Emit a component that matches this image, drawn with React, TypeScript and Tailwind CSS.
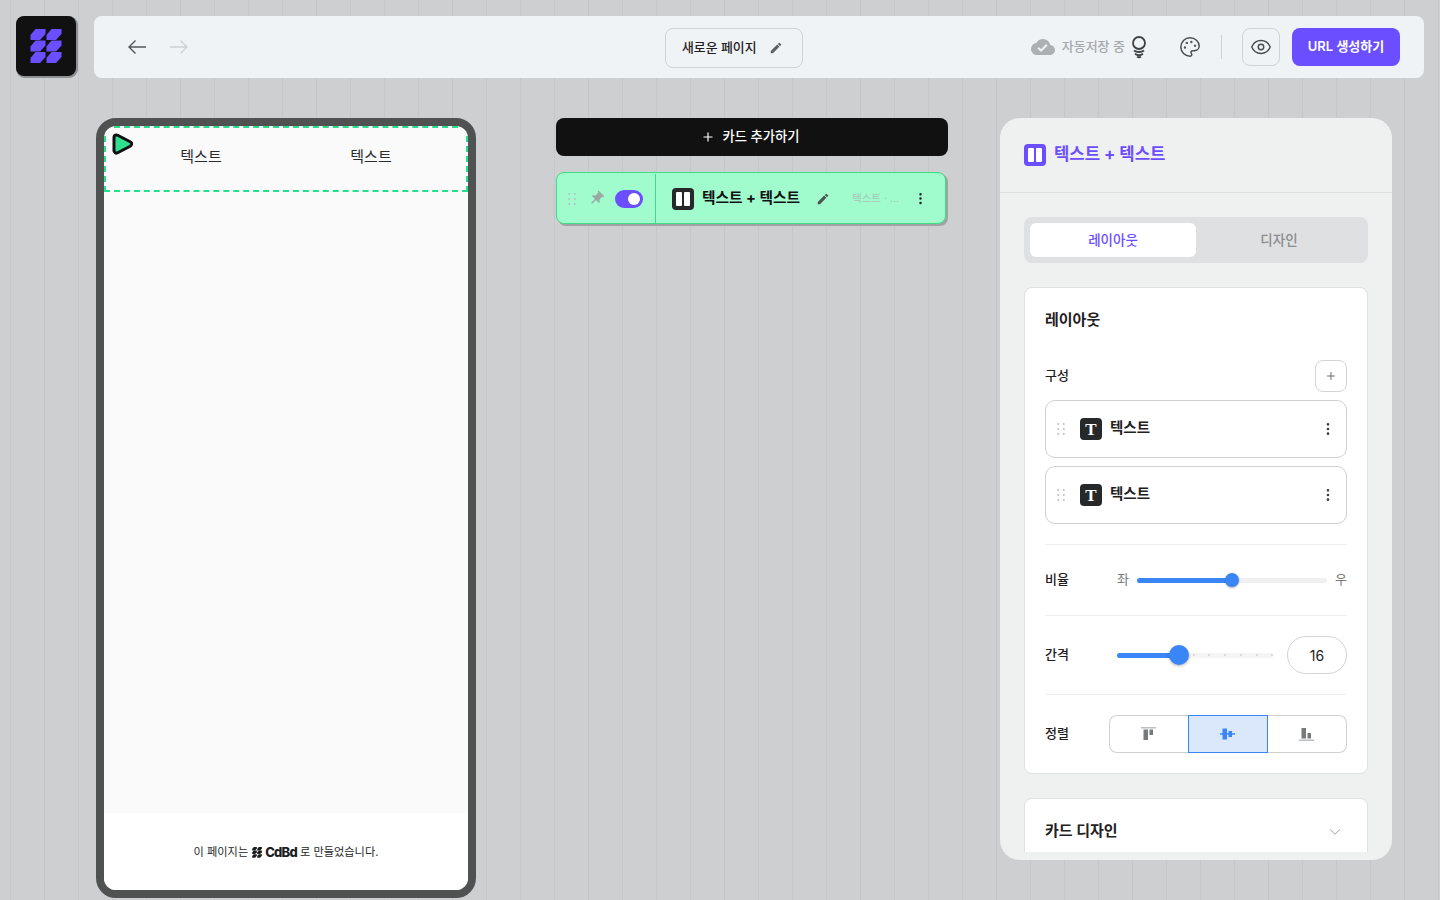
import React from 'react';
import { ChevronDown, Eye, MoreVertical, Palette, Plus } from 'lucide-react';
import { MdCloudDone, MdEdit, MdPushPin } from 'react-icons/md';

const Logo = ({ size = 32, fill = '#6b4eff' }: { size?: number; fill?: string }) => (
  <svg width={size} height={(size * 34) / 32} viewBox="0 0 32 34" fill={fill}>
    {[0, 11.5, 23].map((y) => (
      <React.Fragment key={y}>
        <path d={`M5.500 ${y}H15.500V${y + 5}L10 ${y + 11}H0.500V${y + 6}Z`} />
        <path d={`M21.500 ${y}H31.500V${y + 5}L26 ${y + 11}H16.500V${y + 6}Z`} />
      </React.Fragment>
    ))}
  </svg>
);

const Grip = () => (
  <svg width="8" height="12" viewBox="0 0 8 12" fill="#bdbfc0">
    {[1, 6, 11].map((y) => (
      <React.Fragment key={y}>
        <circle cx="1.2" cy={y} r="1" />
        <circle cx="6.8" cy={y} r="1" />
      </React.Fragment>
    ))}
  </svg>
);

const Arrow = ({ color, flip }: { color: string; flip?: boolean }) => (
  <svg width="20" height="16" viewBox="0 0 20 16" fill="none" stroke={color} strokeWidth="1.4" className={flip ? 'rotate-180' : ''}>
    <path d="M19 8H2M8.500 1.500L2 8l6.500 6.500" />
  </svg>
);

const Columns = ({ color }: { color: string }) => (
  <span className="flex h-[22px] w-[22px] items-center justify-center gap-[2px] rounded-[4px]" style={{ backgroundColor: color }}>
    <span className="h-[14px] w-[6px] rounded-[1px] bg-white" />
    <span className="h-[14px] w-[6px] rounded-[1px] bg-white" />
  </span>
);

const PartRow = () => (
  <div className="flex h-[58px] items-center rounded-[10px] border border-[#cfd0d1] pl-[11px] pr-[10px]">
    <Grip />
    <span className="ml-[15px] flex h-[22px] w-[22px] items-center justify-center rounded-[4px] bg-[#27282a] text-[17px] font-bold leading-none text-white [font-family:'Liberation_Serif',serif]">T</span>
    <span className="ml-[8px] -mt-[3px] text-[14.5px] font-semibold text-[#1f2022]">텍스트</span>
    <MoreVertical className="ml-auto text-[#3c3d3f]" size={16} />
  </div>
);

export default function App() {
  return (
    <div className="flex h-[900px] w-[1440px] flex-col overflow-hidden bg-[#cecfd1] bg-[linear-gradient(90deg,#c5c8ca_1px,transparent_1px)] bg-[size:34px_100%] bg-[position:10px_0] pl-[16px] pt-[16px] [font-family:Inter,'Noto_Sans_CJK_KR',sans-serif]">
      <div className="flex h-[62px] gap-[18px]">
        <div className="flex h-[60px] w-[60px] items-center justify-center rounded-[8px] bg-[#111112] shadow-[1px_1px_0_1px_#8e9092]">
          <Logo />
        </div>
        <header className="relative flex w-[1330px] items-center rounded-[8px] bg-[#eff3f6] pl-[33px] pr-[24px]">
          <Arrow color="#55585a" />
          <span className="ml-[22px]"><Arrow color="#ccd0d2" flip /></span>
          <div className="absolute left-[571px] top-[12px] flex h-[40px] w-[138px] items-center rounded-[8px] border border-[#cfd3d6] pl-[16px]">
            <span className="text-[12.9px] font-medium text-[#1f2022]">새로운 페이지</span>
            <MdEdit size={14} className="ml-[12px] text-[#5f6163]" />
          </div>
          <div className="ml-auto flex items-center">
            <MdCloudDone size={24} className="text-[#adb0b2]" />
            <span className="ml-[7px] text-[13px] font-medium text-[#a6a9ab]">자동저장 중</span>
            <svg className="ml-[5px]" width="18" height="24" viewBox="0 0 18 24" fill="none" stroke="#3f4143" strokeWidth="1.8">
              <circle cx="9" cy="8" r="6" />
              <path d="M4 15.500c2.500 2 7.500 2 10 0M5 18.800c2.500 1.800 5.500 1.800 8 0M7 21.800c1.200.7 2.800.7 4 0" />
            </svg>
            <Palette size={22} strokeWidth={1.6} className="ml-[31px] text-[#4a4c4e]" />
            <span className="ml-[20px] h-[24px] w-px bg-[#cfd3d6]" />
            <button className="ml-[20px] flex h-[38px] w-[38px] items-center justify-center rounded-[8px] border border-[#cfd3d6] text-[#4a4c4e]">
              <Eye size={22} strokeWidth={1.6} />
            </button>
            <button className="ml-[12px] h-[38px] w-[108px] rounded-[8px] bg-[#6b4eff] text-[13px] font-semibold text-white">URL 생성하기</button>
          </div>
        </header>
      </div>

      <div className="ml-[80px] mt-[40px] flex items-start">
        <section className="relative flex h-[780px] w-[380px] flex-col overflow-hidden rounded-[20px] border-[8px] border-[#505252] bg-[#fafafa]">
          <div className="flex h-[66px] border-2 border-dashed border-[#25e08a] pb-[4px] pl-[10px] text-[15px] text-[#2c2d2f]">
            <span className="flex w-[170px] items-center justify-center">텍스트</span>
            <span className="flex w-[170px] items-center justify-center">텍스트</span>
          </div>
          <svg className="absolute left-[6px] top-[5px]" width="26" height="26" viewBox="0 0 26 26" strokeLinejoin="round">
            <path d="M6.500 6.500L19 13 6.500 19.500Z" fill="#111" stroke="#111" strokeWidth="8" />
            <path d="M6.500 6.500L19 13 6.500 19.500Z" fill="#2fe08e" stroke="#2fe08e" strokeWidth="2" />
          </svg>
          <footer className="mt-auto flex h-[77px] items-center justify-center bg-white pt-[2px] text-[11.2px] text-[#26272a]">
            <span>이 페이지는</span>
            <span className="ml-[4px] mr-[3px]"><Logo size={10} fill="#1c1d1f" /></span>
            <span className="text-[13px] font-extrabold tracking-[-0.06em] text-[#1c1d1f]">CdBd</span>
            <span className="ml-[3px]">로 만들었습니다.</span>
          </footer>
        </section>

        <section className="ml-[80px] flex w-[392px] flex-col">
          <button className="flex h-[38px] items-center justify-center gap-[8px] rounded-[8px] bg-[#111112] pr-[4px] text-[13.3px] font-medium text-white">
            <Plus size={14} /> 카드 추가하기
          </button>
          <div className="mt-[16px] flex h-[52px] w-[390px] items-center rounded-[8px] border border-[#3edd87] bg-[#a0fbcd] pt-[1px] shadow-[2px_2px_0_#a0a3a5]">
            <div className="flex h-full w-[99px] items-center border-r border-[#3edd87] pl-[11px]">
              <Grip />
              <MdPushPin size={17} className="ml-[12px] rotate-45 text-[#9aa8a2]" />
              <span className="ml-[10px] flex h-[18px] w-[28px] items-center justify-end rounded-full bg-[#6b4eff] pr-[3px]">
                <span className="h-[12px] w-[12px] rounded-full bg-white" />
              </span>
            </div>
            <div className="ml-[16px]"><Columns color="#27282a" /></div>
            <span className="-mt-[1px] ml-[8px] text-[14.7px] font-bold text-[#111112]">텍스트 + 텍스트</span>
            <MdEdit size={14} className="ml-[16px] text-[#4c5550]" />
            <span className="ml-[22px] text-[10.5px] text-[#a9c4b6]">텍스트 · ...</span>
            <MoreVertical size={15} className="ml-[14px] text-[#1f2022]" />
          </div>
        </section>

        <aside className="ml-[52px] flex h-[742px] w-[392px] flex-col overflow-hidden rounded-[20px] bg-[#eff0f0] pb-[8px]">
          <div className="flex h-[75px] shrink-0 items-center gap-[8px] border-b border-[#dfe0e1] pl-[24px] pb-[1px]">
            <Columns color="#6b4eff" />
            <span className="text-[16.7px] font-bold text-[#6b4eff]">텍스트 + 텍스트</span>
          </div>
          <div className="flex-1 overflow-hidden px-[24px] pt-[24px]">
            <div className="flex h-[46px] rounded-[8px] bg-[#dfe0e2] p-[6px] text-[13.5px] font-medium">
              <span className="flex h-[34px] w-[166px] items-center justify-center rounded-[6px] bg-white text-[#6b4eff]">레이아웃</span>
              <span className="flex h-[34px] flex-1 items-center justify-center text-[#8a8c8e]">디자인</span>
            </div>

            <div className="mt-[24px] h-[487px] rounded-[8px] border border-[#e0e1e2] bg-white px-[20px] pt-[21px]">
              <h2 className="text-[15px] font-bold leading-[22px] text-[#1f2022]">레이아웃</h2>
              <div className="mt-[29px] flex items-center justify-between">
                <span className="text-[13px] font-medium text-[#1f2022]">구성</span>
                <button className="flex h-[32px] w-[32px] items-center justify-center rounded-[8px] border border-[#d3d4d5] text-[#6a6c6e]">
                  <Plus size={12} />
                </button>
              </div>
              <div className="mt-[8px] flex flex-col gap-[8px]">
                <PartRow />
                <PartRow />
              </div>
              <div className="mt-[20px] flex h-[72px] items-center border-y border-[#efefef]">
                <span className="w-[72px] text-[13px] font-medium text-[#1f2022]">비율</span>
                <span className="text-[13px] text-[#77797b]">좌</span>
                <div className="relative ml-[8px] h-[5px] w-[190px] rounded-full bg-[#f0f0f1]">
                  <div className="h-full w-[95px] rounded-full bg-[#3b86f7]" />
                  <span className="absolute left-[88px] top-[-4.500px] h-[14px] w-[14px] rounded-full bg-[#3b86f7] shadow-[0_1px_2px_rgba(0,0,0,0.3)]" />
                </div>
                <span className="ml-[8px] text-[13px] text-[#77797b]">우</span>
              </div>
              <div className="flex h-[79px] items-center border-b border-[#efefef]">
                <span className="w-[72px] text-[13px] font-medium text-[#1f2022]">간격</span>
                <div className="relative h-[5px] w-[156px] rounded-full bg-[#f5f5f5]">
                  <div className="h-full w-[62px] rounded-full bg-[#3b86f7]" />
                  {[76, 91, 107, 123, 139, 154].map((x) => (
                    <span key={x} className="absolute top-[1.500px] h-[2px] w-[2px] rounded-full bg-[#cfd0d1]" style={{ left: x }} />
                  ))}
                  <span className="absolute left-[52px] top-[-7.500px] h-[20px] w-[20px] rounded-full bg-[#3b86f7] shadow-[0_1px_3px_rgba(0,0,0,0.3)]" />
                </div>
                <span className="ml-auto flex h-[38px] w-[60px] items-center justify-center rounded-full border border-[#d3d4d5] text-[14px] text-[#1f2022]">16</span>
              </div>
              <div className="mt-[20px] flex items-center">
                <span className="w-[64px] text-[13px] font-medium text-[#1f2022]">정렬</span>
                <div className="flex h-[38px] w-[238px]">
                  <span className="flex w-[79px] items-center justify-center rounded-l-[8px] border-y border-l border-[#cfd0d1]">
                    <svg width="16" height="14" viewBox="0 0 16 14"><rect y="0" width="15" height="1.500" fill="#bcbdbe" /><rect x="2.500" y="2.500" width="4.500" height="10.500" fill="#77797b" /><rect x="8.500" y="2.500" width="3.500" height="5.500" fill="#77797b" /></svg>
                  </span>
                  <span className="flex w-[80px] items-center justify-center border border-[#3b86f7] bg-[#dbe8fb]">
                    <svg width="16" height="12" viewBox="0 0 16 12"><rect y="5.200" width="15" height="1.500" fill="#3b86f7" /><rect x="2.500" y="0.500" width="4.500" height="11" fill="#3b86f7" /><rect x="8.500" y="3" width="3.500" height="6" fill="#3b86f7" /></svg>
                  </span>
                  <span className="flex flex-1 items-center justify-center rounded-r-[8px] border-y border-r border-[#cfd0d1]">
                    <svg width="16" height="14" viewBox="0 0 16 14"><rect y="12.500" width="15" height="1.500" fill="#bcbdbe" /><rect x="2.500" y="1" width="4.500" height="10.500" fill="#77797b" /><rect x="8.500" y="6" width="3.500" height="5.500" fill="#77797b" /></svg>
                  </span>
                </div>
              </div>
            </div>

            <div className="mt-[24px] flex h-[80px] items-start justify-between rounded-[8px] border border-[#e0e1e2] bg-white pl-[20px] pr-[23px] pt-[21px]">
              <h2 className="text-[15px] font-bold leading-[22px] text-[#1f2022]">카드 디자인</h2>
              <ChevronDown size={18} strokeWidth={1.3} className="mt-[3px] text-[#9a9c9e]" />
            </div>
          </div>
        </aside>
      </div>
    </div>
  );
}
